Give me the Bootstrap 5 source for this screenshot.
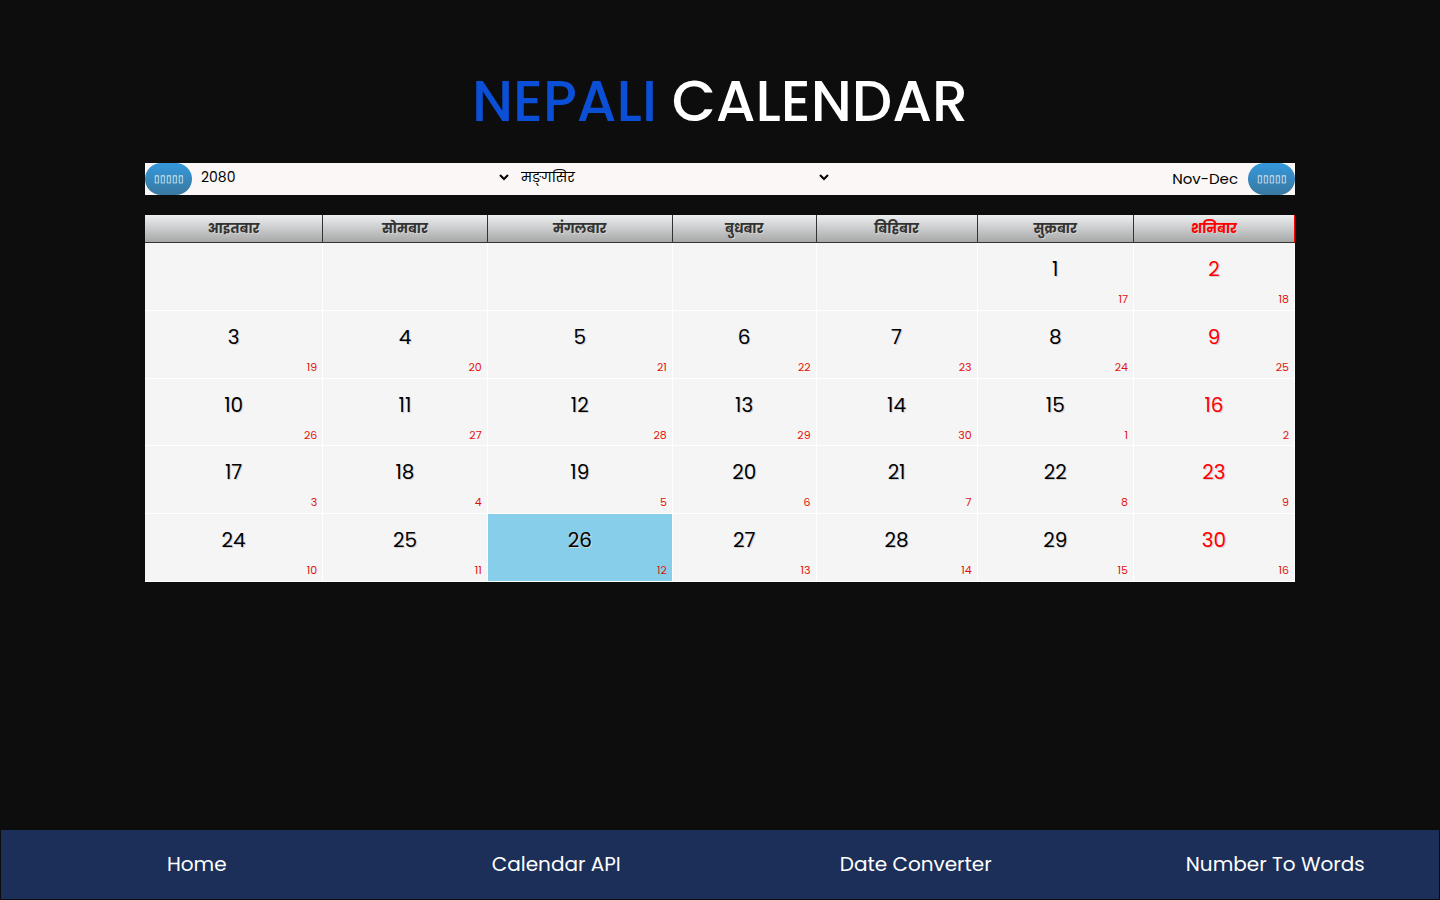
<!DOCTYPE html>
<html lang="ne">
<head>
<meta charset="utf-8">
<meta name="viewport" content="width=device-width, initial-scale=1">
<title>Nepali Calendar</title>
<link href="https://cdn.jsdelivr.net/npm/bootstrap@5.3.0/dist/css/bootstrap.min.css" rel="stylesheet">
<style>
  body { background: #0d0d0d; color: #000; font-family: Poppins, Inter, "Noto Sans Devanagari", sans-serif; }
  main { width: 80%; max-width: 1150px; padding-top: 65px; }
  h1 { font-size: 57px; line-height: 72px; font-weight: 500; color: #fff; margin-bottom: 26px; }
  h1 span { color: #0b4fd6; }
  .toolbar { background: #fbf7f6; height: 32px; font-size: 15px; }
  .step-btn { width: 47px; height: 32px; border: 0; border-radius: 16px; color: #fff; font: 10px/32px "Liberation Sans", sans-serif; background: linear-gradient(#3498db, #3a78a0); padding: 0; }
  .picker { width: 320px; height: 28px; border: 0; background: transparent; color: #000; font-size: 14px; padding: 0 5px; }
  .period { margin-right: 10px; }
  .month { table-layout: fixed; width: 100%; height: 367px; margin-top: 20px; border-collapse: separate; border-spacing: 0; text-align: center; text-shadow: 1px 1px 0 #d3d3d3; }
  .month thead { background: linear-gradient(#eceff1, #a5a5a5); }
  .month th { height: 28px; font-size: 13px; line-height: 20px; padding: 0; font-weight: 700; color: #333; border-right: 1px solid #333; border-bottom: 1px solid #333; }
  .month th:last-child { color: #f00; border-right-color: #f00; }
  .month td { height: 67px; background: #f5f5f5; border-right: 1px solid #fff; border-bottom: 1px solid #fff; padding: 11px 5px 0; font-size: 20px; line-height: 30px; vertical-align: top; }
  .month td:last-child { color: #f00; }
  .month small { display: block; margin-top: 8px; text-align: right; font-size: 11px; line-height: 15px; color: #e1140a; text-shadow: none; }
  .month td.today { background: #87ceeb; }
  .tabs { background: #1b2f59; border: 1px solid #0d0d0d; height: 71px; padding-bottom: 2px; }
  .tabs a { color: #fff; font-size: 20px; line-height: 30px; padding-left: 32px; text-decoration: none; }
</style>
</head>
<body class="min-vh-100 d-flex flex-column">
<main class="mx-auto flex-grow-1">
  <h1 class="text-center"><span>NEPALI</span> CALENDAR</h1>
  <div class="toolbar d-flex align-items-center">
    <button type="button" class="step-btn" aria-label="पछाडि">▯▯▯▯▯</button>
    <select class="picker align-self-start" aria-label="Year"><option>2080</option></select>
    <select class="picker align-self-start" aria-label="Month"><option>मङ्गसिर</option></select>
    <span class="period ms-auto">Nov-Dec</span>
    <button type="button" class="step-btn" aria-label="अगाडि">▯▯▯▯▯</button>
  </div>
  <table class="month">
    <colgroup><col style="width:15.5%"><col style="width:14.3%"><col style="width:16.1%"><col style="width:12.5%"><col style="width:14%"><col style="width:13.6%"><col style="width:14%"></colgroup>
    <thead><tr><th>आइतबार</th><th>सोमबार</th><th>मंगलबार</th><th>बुधबार</th><th>बिहिबार</th><th>सुक्रबार</th><th>शनिबार</th></tr></thead>
    <tbody>
      <tr><td></td><td></td><td></td><td></td><td></td><td>1<small>17</small></td><td>2<small>18</small></td></tr>
      <tr><td>3<small>19</small></td><td>4<small>20</small></td><td>5<small>21</small></td><td>6<small>22</small></td><td>7<small>23</small></td><td>8<small>24</small></td><td>9<small>25</small></td></tr>
      <tr><td>10<small>26</small></td><td>11<small>27</small></td><td>12<small>28</small></td><td>13<small>29</small></td><td>14<small>30</small></td><td>15<small>1</small></td><td>16<small>2</small></td></tr>
      <tr><td>17<small>3</small></td><td>18<small>4</small></td><td>19<small>5</small></td><td>20<small>6</small></td><td>21<small>7</small></td><td>22<small>8</small></td><td>23<small>9</small></td></tr>
      <tr><td>24<small>10</small></td><td>25<small>11</small></td><td class="today">26<small>12</small></td><td>27<small>13</small></td><td>28<small>14</small></td><td>29<small>15</small></td><td>30<small>16</small></td></tr>
    </tbody>
  </table>
</main>
<nav class="tabs d-flex align-items-center text-center">
  <a class="col-3" href="#">Home</a>
  <a class="col-3" href="#">Calendar API</a>
  <a class="col-3" href="#">Date Converter</a>
  <a class="col-3" href="#">Number To Words</a>
</nav>
<script src="https://cdn.jsdelivr.net/npm/bootstrap@5.3.0/dist/js/bootstrap.bundle.min.js"></script>
</body>
</html>
